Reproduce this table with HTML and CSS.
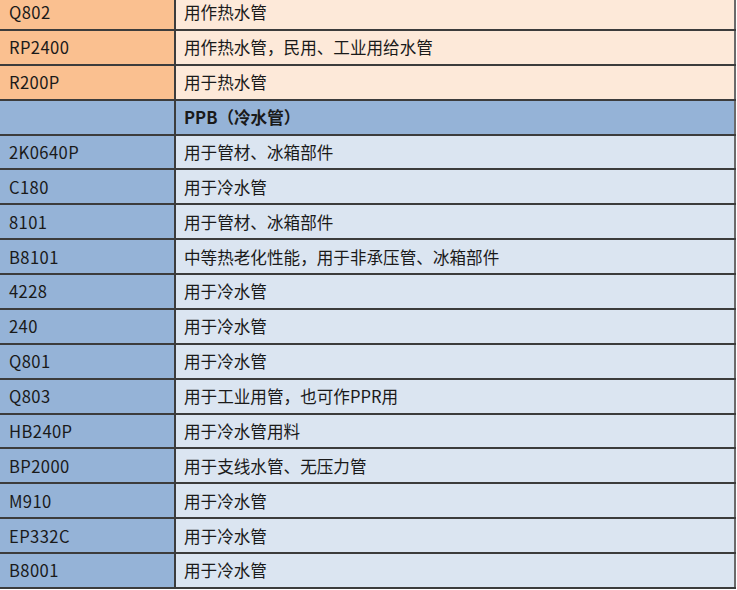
FILE: index.html
```html
<!DOCTYPE html>
<html lang="zh-CN">
<head>
<meta charset="utf-8">
<link rel="stylesheet" href="styles.css">
</head>
<body>
<table class="grade-table">
  <tbody>
    <tr class="hot"><td class="code">Q802</td><td class="use">用作热水管</td></tr>
    <tr class="hot"><td class="code">RP2400</td><td class="use">用作热水管，民用、工业用给水管</td></tr>
    <tr class="hot"><td class="code">R200P</td><td class="use">用于热水管</td></tr>
    <tr class="section"><td class="code"></td><td class="use head">PPB（冷水管）</td></tr>
    <tr class="cold"><td class="code">2K0640P</td><td class="use">用于管材、冰箱部件</td></tr>
    <tr class="cold"><td class="code">C180</td><td class="use">用于冷水管</td></tr>
    <tr class="cold"><td class="code">8101</td><td class="use">用于管材、冰箱部件</td></tr>
    <tr class="cold"><td class="code">B8101</td><td class="use">中等热老化性能，用于非承压管、冰箱部件</td></tr>
    <tr class="cold"><td class="code">4228</td><td class="use">用于冷水管</td></tr>
    <tr class="cold"><td class="code">240</td><td class="use">用于冷水管</td></tr>
    <tr class="cold"><td class="code">Q801</td><td class="use">用于冷水管</td></tr>
    <tr class="cold"><td class="code">Q803</td><td class="use">用于工业用管，也可作PPR用</td></tr>
    <tr class="cold"><td class="code">HB240P</td><td class="use">用于冷水管用料</td></tr>
    <tr class="cold"><td class="code">BP2000</td><td class="use">用于支线水管、无压力管</td></tr>
    <tr class="cold"><td class="code">M910</td><td class="use">用于冷水管</td></tr>
    <tr class="cold"><td class="code">EP332C</td><td class="use">用于冷水管</td></tr>
    <tr class="cold"><td class="code">B8001</td><td class="use">用于冷水管</td></tr>
  </tbody>
</table>
</body>
</html>
```
FILE: styles.css
```css
html, body {
  margin: 0;
  padding: 0;
  background: #ffffff;
}
body {
  font-family: "Noto Sans CJK SC", "Noto Sans", sans-serif;
  font-size: 16.6px;
  color: #1a1a1a;
  overflow: hidden;
}
.grade-table {
  border-collapse: collapse;
  table-layout: fixed;
  width: 736px;
  margin-top: -6px;
}
.grade-table td {
  height: 32.875px;
  padding: 0 0 0 9px;
  border-top: 2px solid #3c3c3c;
  border-bottom: 2px solid #3c3c3c;
  vertical-align: middle;
  line-height: 20px;
  white-space: nowrap;
}
.grade-table td.code {
  width: 165px;
  border-right: 2px solid #3c3c3c;
  letter-spacing: 0.4px;
}
.grade-table td.use {
  border-right: 2px solid #6a6a6a;
  padding-left: 8px;
}
.hot .code { background: #fac090; }
.hot .use { background: #fde9d9; }
.section td { background: #95b3d7; }
.cold .code { background: #95b3d7; }
.cold .use { background: #dbe5f1; }
.use.head { font-weight: bold; }
```
